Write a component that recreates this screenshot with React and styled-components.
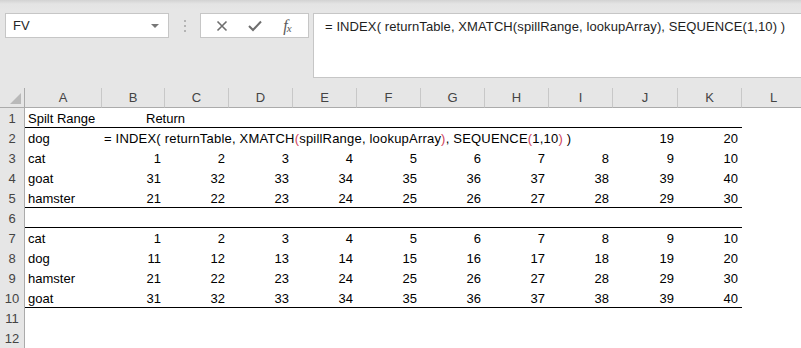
import React from "react";
import styled, { createGlobalStyle } from "styled-components";

const GlobalStyle = createGlobalStyle`
  html, body {
    margin: 0;
    padding: 0;
    background: #fff;
  }
  body {
    font-family: "Liberation Sans", Arial, sans-serif;
    overflow: hidden;
  }
`;

const COLS = ["A", "B", "C", "D", "E", "F", "G", "H", "I", "J", "K", "L"];
const WIDTHS = [77, 63, 64, 64, 64, 64, 64, 64, 64, 65, 64, 64];

const range = (from) => Array.from({ length: 10 }, (_, i) => from + i);

// each row: label in A, values for B..K, and whether it has a rule below
const ROWS = [
  { label: "Spilt Range", kind: "head", line: true },
  { label: "dog", kind: "formula", values: { J: 19, K: 20 } },
  { label: "cat", values: range(1) },
  { label: "goat", values: range(31) },
  { label: "hamster", values: range(21), line: true },
  { label: "", line: true },
  { label: "cat", values: range(1) },
  { label: "dog", values: range(11) },
  { label: "hamster", values: range(21) },
  { label: "goat", values: range(31), line: true },
  { label: "" },
  { label: "" },
];

const Page = styled.div`
  width: 801px;
  height: 348px;
  overflow: hidden;
  background: #fff;
`;

const Toolbar = styled.div`
  height: 88px;
  box-sizing: border-box;
  background: linear-gradient(#d2d2d2 0, #e4e4e4 4px, #e6e6e6 10px);
  display: flex;
  align-items: flex-start;
  padding: 13px 0 0 5px;
`;

const NameBox = styled.div`
  width: 164px;
  height: 25px;
  box-sizing: border-box;
  background: #fff;
  border: 1px solid #c6c6c6;
  display: flex;
  align-items: center;
  justify-content: space-between;
  padding: 0 9px 0 7px;
  font-size: 13px;
  color: #262626;
`;

const Caret = styled.span`
  width: 0;
  height: 0;
  border-left: 4px solid transparent;
  border-right: 4px solid transparent;
  border-top: 4px solid #777;
`;

const Grip = styled.div`
  width: 31px;
  height: 25px;
  display: flex;
  flex-direction: column;
  align-items: center;
  justify-content: center;
  gap: 3px;

  span {
    width: 2px;
    height: 2px;
    background: #b4b4b4;
  }
`;

const ButtonGroup = styled.div`
  width: 109px;
  height: 25px;
  box-sizing: border-box;
  background: #fff;
  border: 1px solid #c6c6c6;
  display: flex;
  align-items: center;
  justify-content: space-around;
  padding: 0 4px;
  margin-right: 4px;
`;

const IconButton = styled.span`
  width: 28px;
  display: flex;
  justify-content: center;
  align-items: center;
  color: #6e6e6e;
`;

const Fx = styled.span`
  font-family: "Liberation Serif", "Times New Roman", serif;
  font-style: italic;
  font-size: 16px;
  line-height: 1;
  color: #5a5a5a;

  sub {
    font-size: 11px;
    vertical-align: -1px;
    margin-left: -1px;
  }
`;

const FormulaBox = styled.div`
  flex: 1;
  height: 65px;
  box-sizing: border-box;
  background: #fff;
  border: 1px solid #c6c6c6;
  border-right: none;
  padding: 5px 0 0 11px;
  font-size: 13px;
  letter-spacing: 0.1px;
  color: #1e1e1e;
  white-space: nowrap;
`;

const Sheet = styled.div`
  display: grid;
  grid-template-columns: 25px ${WIDTHS.map((w) => `${w}px`).join(" ")};
  grid-auto-rows: 20px;
  font-size: 13px;
  color: #000;
`;

const Corner = styled.div`
  background: #e6e6e6;
  border-right: 1px solid #ababab;
  border-bottom: 1px solid #ababab;
  box-sizing: border-box;
  position: relative;

  &::after {
    content: "";
    position: absolute;
    right: 3px;
    bottom: 3px;
    border-left: 11px solid transparent;
    border-bottom: 11px solid #b9b9b9;
  }
`;

const ColHead = styled.div`
  background: #e6e6e6;
  border-right: 1px solid #c8c8c8;
  border-bottom: 1px solid #ababab;
  box-sizing: border-box;
  display: flex;
  align-items: center;
  justify-content: center;
  color: #444;
`;

const RowHead = styled.div`
  background: #e6e6e6;
  border-right: 1px solid #ababab;
  box-sizing: border-box;
  display: flex;
  align-items: center;
  justify-content: center;
  color: #444;
`;

const Cell = styled.div`
  box-sizing: border-box;
  border-bottom: 1px solid ${({ $line }) => ($line ? "#000" : "transparent")};
  display: flex;
  align-items: center;
  justify-content: ${({ $right }) => ($right ? "flex-end" : "flex-start")};
  padding: 1px 4px 0 ${({ $indent }) => $indent || 3}px;
  white-space: pre;
  overflow: visible;
  min-width: 0;
`;

const Spill = styled.span`
  letter-spacing: 0.2px;
`;

const Paren = styled.span`
  color: #d1435b;
`;

const Cancel = () => (
  <svg width="12" height="12" viewBox="0 0 12 12">
    <path d="M1.5 1.5 L10.5 10.5 M10.5 1.5 L1.5 10.5" stroke="#6e6e6e" strokeWidth="1.6" fill="none" />
  </svg>
);

const Check = () => (
  <svg width="14" height="12" viewBox="0 0 14 12">
    <path d="M1 6 L5 10 L13 1.5" stroke="#6e6e6e" strokeWidth="2" fill="none" />
  </svg>
);

const FormulaText = () => (
  <Spill>
    {"= INDEX( returnTable, XMATCH"}
    <Paren>(</Paren>
    {"spillRange, lookupArray"}
    <Paren>)</Paren>
    {", SEQUENCE"}
    <Paren>(</Paren>
    {"1,10"}
    <Paren>)</Paren>
    {" )"}
  </Spill>
);

const renderCells = (row) => {
  return COLS.map((col, i) => {
    const line = row.line && i < 11;
    if (col === "A") {
      return (
        <Cell key={col} $line={line}>
          {row.label}
        </Cell>
      );
    }
    if (row.kind === "head") {
      return (
        <Cell key={col} $line={line} $indent={col === "B" ? 44 : 3}>
          {col === "B" ? "Return" : ""}
        </Cell>
      );
    }
    if (row.kind === "formula") {
      if (col === "B") {
        return (
          <Cell key={col} $line={line} $indent={2}>
            <FormulaText />
          </Cell>
        );
      }
      return (
        <Cell key={col} $line={line} $right>
          {row.values[col] ?? ""}
        </Cell>
      );
    }
    const idx = i - 1;
    const value = row.values && idx < 10 ? row.values[idx] : "";
    return (
      <Cell key={col} $line={line} $right>
        {value}
      </Cell>
    );
  });
};

export default function App() {
  return (
    <Page>
      <GlobalStyle />
      <Toolbar>
        <NameBox>
          FV
          <Caret />
        </NameBox>
        <Grip>
          <span />
          <span />
          <span />
        </Grip>
        <ButtonGroup>
          <IconButton>
            <Cancel />
          </IconButton>
          <IconButton>
            <Check />
          </IconButton>
          <IconButton>
            <Fx>
              f<sub>x</sub>
            </Fx>
          </IconButton>
        </ButtonGroup>
        <FormulaBox>
          = INDEX( returnTable, XMATCH(spillRange, lookupArray), SEQUENCE(1,10) )
        </FormulaBox>
      </Toolbar>
      <Sheet>
        <Corner />
        {COLS.map((c) => (
          <ColHead key={c}>{c}</ColHead>
        ))}
        {ROWS.map((row, r) => (
          <React.Fragment key={r}>
            <RowHead>{r + 1}</RowHead>
            {renderCells(row)}
          </React.Fragment>
        ))}
      </Sheet>
    </Page>
  );
}
